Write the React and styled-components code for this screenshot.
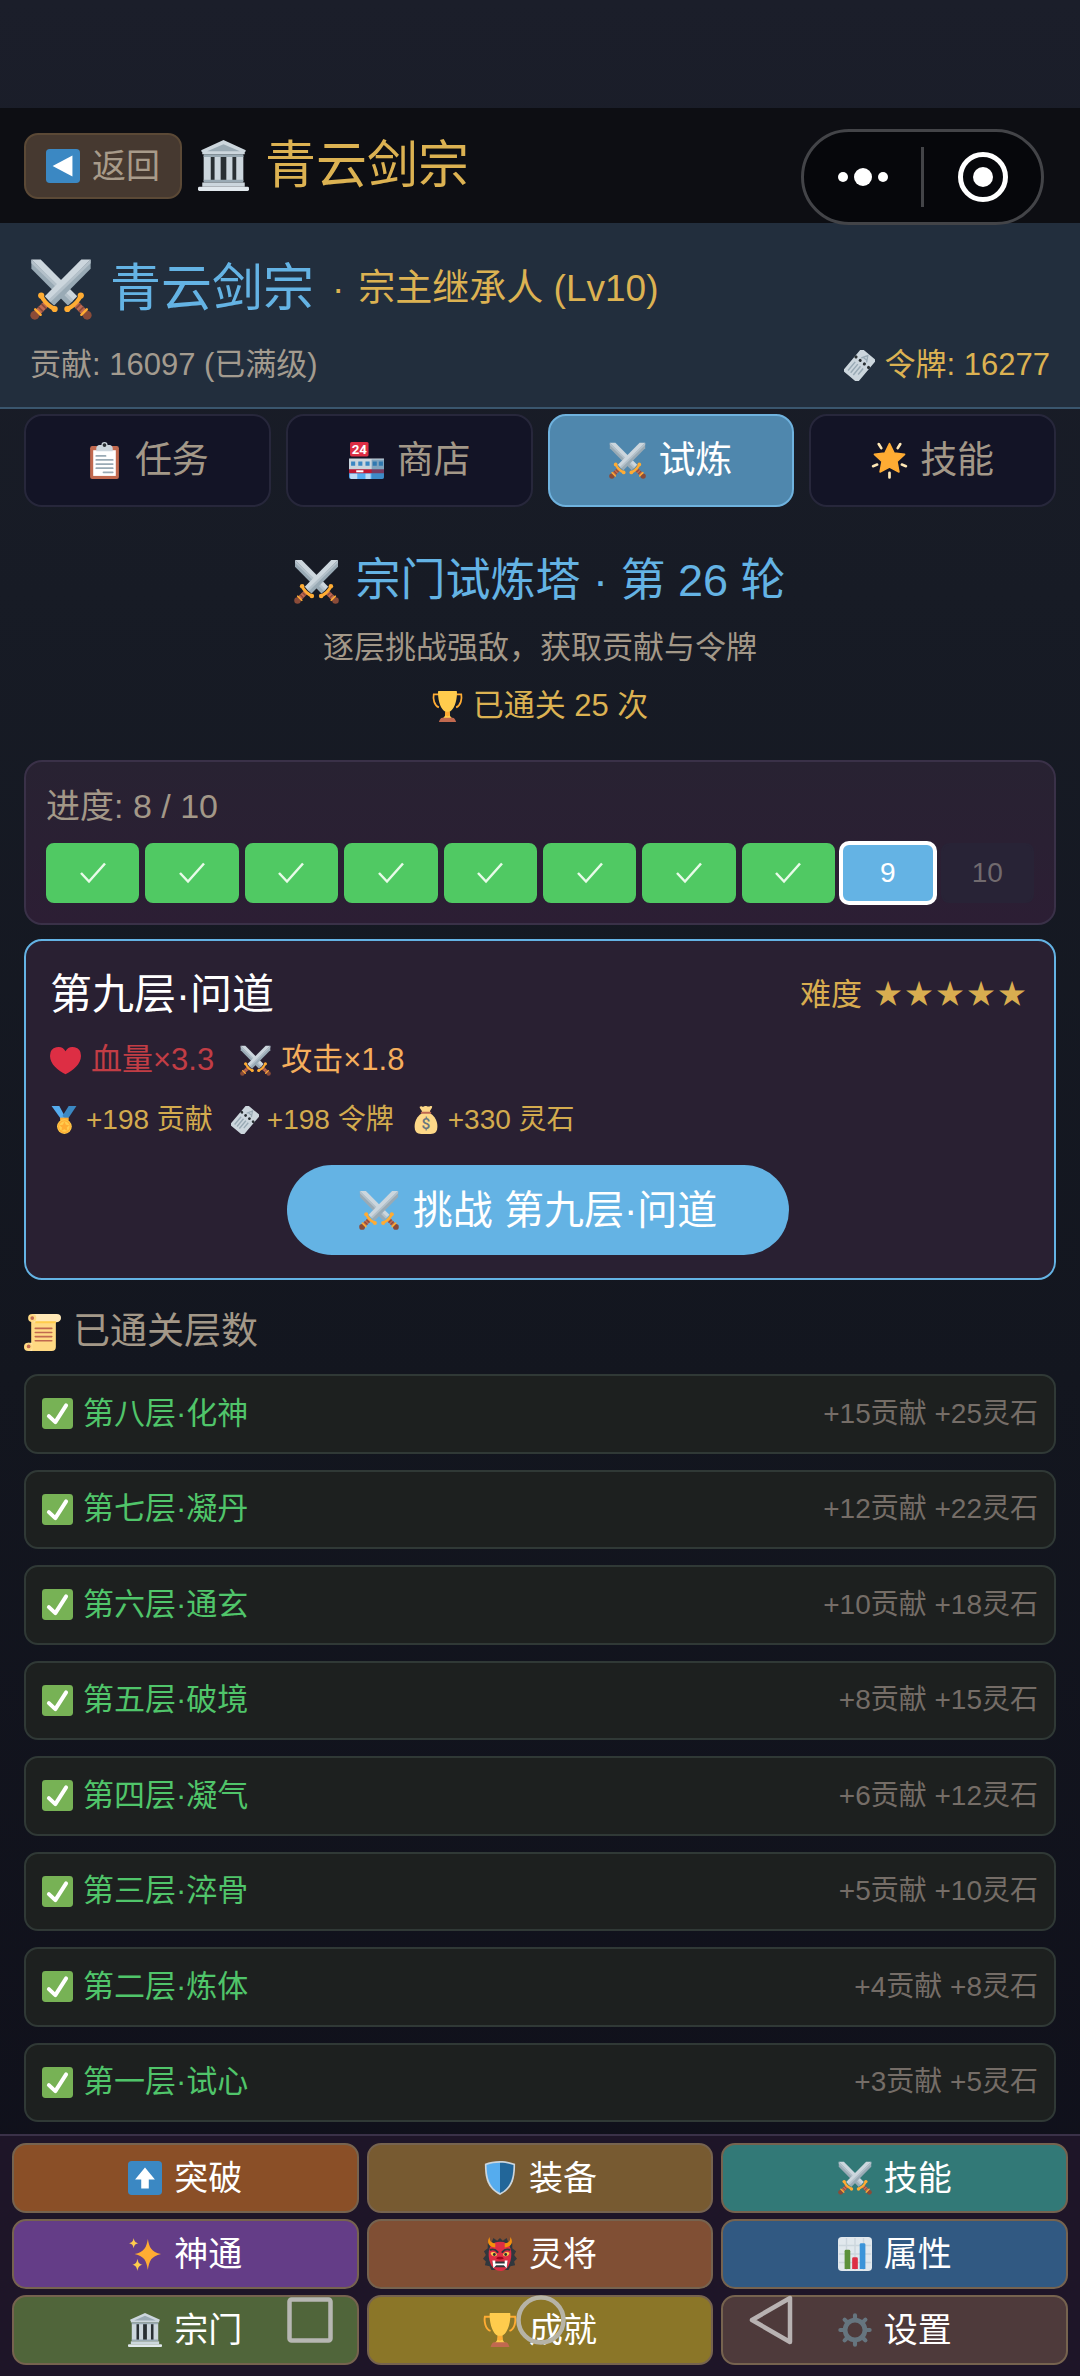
import React from 'react'
import styled, { createGlobalStyle } from 'styled-components'

const GlobalStyle = createGlobalStyle`
  * {
    box-sizing: border-box;
  }

  body {
    margin: 0;
    background: #10111b;
    font-family: 'Liberation Sans', 'Noto Sans CJK SC', sans-serif;
  }

  button {
    font-family: inherit;
    line-height: 50px;
    cursor: pointer;
  }

  h1, h2, h3, p, ul {
    margin: 0;
    padding: 0;
    font-weight: 400;
  }
`

/* ---------- icons ---------- */

const Svg = styled.svg`
  display: block;
  flex: none;
  width: ${p => p.$size}px;
  height: ${p => p.$size}px;
`

const Icon = ({ size, children }) => (
  <Svg $size={size} viewBox="0 0 36 36" aria-hidden="true">{children}</Svg>
)

const Sword = ({ transform }) => (
  <g transform={transform}>
    <path fill="#99AAB5" d="M35.2.8v5.400L14 27.600 11 25z" />
    <path fill="#CCD6DD" d="M35.2.8h-5.400L8.600 22.200l2.600 2.800z" />
    <path fill="#B4C1CA" d="M35.2.8L10.800 24.200l1.200 1.400L35.2 3z" />
    <path stroke="#BF6952" strokeWidth="3.8" d="M9.500 26.500L4 32" />
    <path stroke="#8A4B38" strokeWidth="1" d="M4.800 28.400l2.800 2.800M6.600 26.600l2.800 2.800" />
    <circle fill="#8A4B38" cx="2.8" cy="33.2" r="2.6" />
    <path fill="none" stroke="#FFAC33" strokeWidth="2.4" strokeLinecap="round" d="M6.6 22c.6 1.4 1 2.2 2.4 3.6l1.6 1.6c1.4 1.2 2 1.6 3.4 2.2" />
    <circle fill="#FFAC33" cx="6.5" cy="21.8" r="1.8" />
    <circle fill="#FFAC33" cx="14.3" cy="29.6" r="1.8" />
    <path stroke="#FFAC33" strokeWidth="1.4" strokeLinecap="round" d="M3 29.800l3.200 3.200" />
  </g>
)

const Swords = ({ size }) => (
  <Icon size={size}>
    <Sword transform="translate(36 0) scale(-1 1)" />
    <Sword />
  </Icon>
)

const BackArrow = ({ size }) => (
  <Icon size={size}>
    <rect fill="#3B88C3" width="36" height="36" rx="4" />
    <path fill="#fff" d="M7 18L28 7v22z" />
  </Icon>
)

const UpArrow = ({ size }) => (
  <Icon size={size}>
    <rect fill="#3B88C3" width="36" height="36" rx="4" />
    <path fill="#fff" d="M18 7l10.500 12.500H22V29h-8v-9.500H7.500z" />
  </Icon>
)

const Temple = ({ size }) => (
  <Icon size={size}>
    <path fill="#292F33" d="M5 11h26v18H5z" />
    <path fill="#CCD6DD" d="M18 0L2.6 7c-.5.3-.6 1 .4 1.4V10h30V8.400c1-.4.9-1.100.4-1.400z" />
    <path fill="#9AAAB4" d="M18 3l11.500 5h-23z" />
    <path fill="#CCD6DD" d="M4 11h5v18H4zm7.700 0H16v18h-4.300zm8.300 0h4.300v18H20zm7 0h5v18h-5z" />
    <path fill="#9AAAB4" d="M4 10h28v2H4zM4 28h28v2H4z" />
    <path fill="#CCD6DD" d="M3 30h30v3H3z" />
    <rect fill="#E1E8ED" y="33" width="36" height="3" rx="1" />
  </Icon>
)

const Ticket = ({ size }) => (
  <Icon size={size}>
    <g transform="rotate(40 18 18)">
      <path fill="#CCD6DD" d="M9 1h18a2 2 0 0 1 2 2v30a2 2 0 0 1-2 2H9a2 2 0 0 1-2-2V3a2 2 0 0 1 2-2z" />
      <path stroke="#99AAB5" strokeWidth="1.7" d="M11.500 18v13M15.500 18v13M19.500 18v13M23.500 18v9" />
      <g fill="#292F33">
        <circle cx="8.5" cy="13" r="1.8" />
        <circle cx="14.8" cy="13" r="1.8" />
        <circle cx="21.2" cy="13" r="1.8" />
        <circle cx="27.5" cy="13" r="1.8" />
      </g>
      <path fill="none" stroke="#99AAB5" strokeWidth="1.6" d="M14 10l4-7 4 7M15.500 8h5" />
    </g>
  </Icon>
)

const Clipboard = ({ size }) => (
  <Icon size={size}>
    <rect fill="#C1694F" x="4" y="4" width="28" height="32" rx="2" />
    <path fill="#fff" d="M7 8h22v25H7z" />
    <path fill="#CCD6DD" d="M23 3h-2a3 3 0 0 0-6 0h-2c-1.500 0-3 1.500-3 3v3h16V6c0-1.500-1.500-3-3-3z" />
    <circle fill="#292F33" cx="18" cy="3" r="1.8" />
    <path stroke="#99AAB5" strokeWidth="1.7" strokeLinecap="round" d="M10 13.500h9M10 17.500h16M10 21.500h16M10 25.500h16M17 29.500h9" />
  </Icon>
)

const Store = ({ size }) => (
  <Icon size={size}>
    <path fill="#55ACEE" d="M1 17h34v17a2 2 0 0 1-2 2H3a2 2 0 0 1-2-2z" />
    <path fill="#CCD6DD" d="M1 16h34v11H1z" />
    <path fill="#3B88C3" d="M3 19h4v4H3zM10 19h4v4h-4zM17 19h4v4h-4zM24 19h4v4h-4zM30 19h4v4h-4z" />
    <path fill="#BE1931" d="M1 26.500h34v4H1z" />
    <path fill="#fff" d="M8 27.500h7v2H8z" />
    <path fill="#BBDDF5" d="M2 31h7v5H3l-1-1zM17 31h5v5h-5z" />
    <path fill="#226699" opacity=".45" d="M23 17h12v17a2 2 0 0 1-2 2H23z" />
    <rect fill="#DD2E44" x="2" width="18" height="14" rx="1.5" />
    <text x="11" y="11.5" textAnchor="middle" fontFamily="Roboto, sans-serif" fontWeight="700" fontSize="13" fill="#fff">24</text>
  </Icon>
)

const GlowStar = ({ size }) => (
  <Icon size={size}>
    <path fill="#FFAC33" stroke="#FFAC33" strokeWidth="1.5" strokeLinejoin="round" d="M18 1.500l4.500 9.200 10.200 1.300-7.400 7 1.900 10.200L18 24.400l-9.200 4.800L10.700 19 3.300 12l10.200-1.300z" />
    <g stroke="#FFE8B6" strokeWidth="2.6" strokeLinecap="round">
      <path d="M7.500 2l2.500 4M28.500 2L26 6M2 23.500l4-1.500M34 23.500L30 22M18 30v4.500" />
    </g>
  </Icon>
)

const Trophy = ({ size }) => (
  <Icon size={size}>
    <path fill="none" stroke="#FFAC33" strokeWidth="2" d="M9 4H2c-1 5 .5 13 6 15M27 4h7c1 5-.5 13-6 15" />
    <path fill="#FFCC4D" d="M7.500 0h21c.4 0 .5 1 .5 2 0 11-4 20-8.500 22-.5 4 .5 6 3.500 8H12c3-2 4-4 3.500-8C11 22 7 13 7 2c0-1 .1-2 .5-2z" />
    <path fill="#FFAC33" d="M15.500 24h5l.5 4-3 1.500L15 28z" />
    <path fill="#C1694F" d="M12 31h12c2 0 3 2 4 5H8c1-3 2-5 4-5z" />
  </Icon>
)

const Heart = ({ size }) => (
  <Icon size={size}>
    <path fill="#DD2E44" d="M35.900 11.800A9.500 9.500 0 0 0 18 7.400 9.500 9.500 0 0 0 .1 11.800C-.8 21.300 9 29.500 18 34c9-4.500 18.800-12.700 17.900-22.200z" />
  </Icon>
)

const Medal = ({ size }) => (
  <Icon size={size}>
    <path fill="#55ACEE" d="M2 0h10l8 15-5 3z" />
    <path fill="#3B88C3" d="M24 0h10L22 18l-6-5z" />
    <path fill="#FFAC33" d="M13 15h11v4H13z" />
    <circle fill="#FFCC4D" cx="18.5" cy="26.5" r="9.5" />
    <circle fill="none" stroke="#FFAC33" strokeWidth="1.5" cx="18.5" cy="26.5" r="7.5" />
    <path fill="#FFAC33" d="M18.500 20l1.900 4.100 4.500.5-3.400 3 1 4.400-4-2.200-4 2.200 1-4.400-3.400-3 4.500-.5z" />
  </Icon>
)

const MoneyBag = ({ size }) => (
  <Icon size={size}>
    <path fill="#FDD888" d="M23 9c10 6 11 18 8.500 23-1.500 3-4 4-13.500 4S6 35 4.500 32C2 27 3 15 13 9z" />
    <path fill="#FDD888" d="M10 1c2-2 3 .5 4.500 0S17-.5 18.500 0 21 1 22.500.5 26-.5 26 1c0 2-3 4-3 7H13c0-3-4-5-3-7z" />
    <path fill="#BF6952" d="M12.500 7.500h11a1.200 1.200 0 0 1 0 2.500h-11a1.200 1.200 0 0 1 0-2.500z" />
    <text x="18" y="30" textAnchor="middle" fontFamily="Roboto, sans-serif" fontWeight="500" fontSize="20" fill="#67757F">$</text>
  </Icon>
)

const Scroll = ({ size }) => (
  <Icon size={size}>
    <path fill="#FFD983" d="M7 4h24v28a4 4 0 0 1-4 4H7z" />
    <path fill="#FFE8B6" d="M8 0h24a4 4 0 0 1 4 4c0 2-1.500 4-4 4H8z" />
    <path fill="#FFCC4D" d="M11 7h20v2H11z" />
    <circle fill="#FFD983" cx="8" cy="4" r="4" />
    <circle fill="#C1694F" cx="8" cy="4" r="1.8" />
    <path fill="#FFE8B6" d="M4 28h4v8H4z" />
    <circle fill="#FFD983" cx="4" cy="32" r="4" />
    <circle fill="#C1694F" cx="4.5" cy="31.5" r="1.8" />
    <path stroke="#C1694F" strokeWidth="1.6" strokeLinecap="round" d="M11 14h16M11 18h16M11 22h16M11 26h16" />
  </Icon>
)

const CheckBox = ({ size }) => (
  <Icon size={size}>
    <rect fill="#77B255" width="36" height="36" rx="4" />
    <path fill="none" stroke="#fff" strokeWidth="4.6" strokeLinecap="round" strokeLinejoin="round" d="M8 21l7.500 7L28 8.500" />
  </Icon>
)

const Shield = ({ size }) => (
  <Icon size={size}>
    <path fill="#CCD6DD" d="M18 0c6 0 11 1 16 3 0 15-2 26-16 33C4 29 2 18 2 3c5-2 10-3 16-3z" />
    <path fill="#55ACEE" d="M18 1.800c-5.500 0-9.800.8-14.300 2.400C4 17.500 6 27.500 18 34z" />
    <path fill="#269" d="M18 1.800c5.500 0 9.800.8 14.300 2.400C32 17.500 30 27.500 18 34z" />
  </Icon>
)

const Sparkles = ({ size }) => (
  <Icon size={size}>
    <path fill="#FFAC33" d="M21 2c1.500 9 3.500 13.500 14 16-10.500 2.500-12.500 7-14 17-1.500-10-3.500-14.500-14-17 10.500-2.500 12.500-7 14-16z" />
    <path fill="#FFCC4D" d="M6 1c.7 3.500 1.500 4.800 5 5.500C7.500 7.200 6.700 8.500 6 12c-.7-3.500-1.500-4.800-5-5.500C4.500 5.800 5.300 4.500 6 1zM10 23c.8 4 1.700 5.600 5.500 6.500C11.700 30.400 10.800 32 10 36c-.8-4-1.700-5.600-5.500-6.500C8.300 28.600 9.200 27 10 23z" />
  </Icon>
)

const Ogre = ({ size }) => (
  <Icon size={size}>
    <path fill="#31373D" d="M18 1l3 3 4-3 2 5 4 1 0 5 4 3-2 4 3 4-3 3 1 4-5 1-2 4H9l-2-4-5-1 1-4-3-3 3-4-2-4 4-3V7l4-1 2-5 4 3z" />
    <path fill="#DD2E44" d="M18 5c8 0 12 5 12 13 0 9-4 18-12 18S6 27 6 18C6 10 10 5 18 5z" />
    <path fill="#F4900C" d="M7 0c0 5 2 6 6 7v4C7 11 3 6 7 0zM29 0c0 5-2 6-6 7v4c6 0 10-5 6-11z" />
    <path fill="#FFCC4D" d="M8 17c2-2 6-1 7 2-2 2-6 2-7-2zM28 17c-2-2-6-1-7 2 2 2 6 2 7-2z" />
    <circle fill="#292F33" cx="12" cy="18.5" r="1.5" />
    <circle fill="#292F33" cx="24" cy="18.5" r="1.5" />
    <path fill="none" stroke="#31373D" strokeWidth="2" strokeLinecap="round" d="M8 13.500c3-1 6 .5 7.500 2.500M28 13.500c-3-1-6 .5-7.500 2.500" />
    <path fill="#A0041E" d="M14 23c1-2 2-2 4-2s3 0 4 2c-2 1-6 1-8 0z" />
    <path fill="#31373D" d="M10 26h16l-1 6H11z" />
    <path fill="#fff" d="M10 25h3v3h10v-3h3l-1 8-3-3h-8l-3 3z" />
  </Icon>
)

const Chart = ({ size }) => (
  <Icon size={size}>
    <rect fill="#E1E8ED" width="36" height="36" rx="4" />
    <path stroke="#CCD6DD" strokeWidth="1.5" d="M1 9h34M1 18h34M1 27h34M9 1v34M18 1v34M27 1v34" />
    <path fill="#5C913B" d="M7 15a1.500 1.500 0 0 1 1.500-1.500h3A1.500 1.500 0 0 1 13 15v19H7z" />
    <path fill="#DD2E44" d="M15 23a1.500 1.500 0 0 1 1.500-1.500h3A1.500 1.500 0 0 1 21 23v11h-6z" />
    <path fill="#3B94D9" d="M23 8a1.500 1.500 0 0 1 1.500-1.500h3A1.500 1.500 0 0 1 29 8v26h-6z" />
  </Icon>
)

const Gear = ({ size }) => (
  <Icon size={size}>
    <circle fill="none" stroke="#66757F" strokeWidth="5" cx="18" cy="18" r="10.5" />
    <g stroke="#66757F" strokeWidth="4.4" strokeLinecap="round">
      <path d="M18 2.500V6M18 30v3.500M2.500 18H6M30 18h3.500M7 7l2.500 2.500M26.500 26.500L29 29M7 29l2.500-2.500M26.500 9.500L29 7" />
    </g>
  </Icon>
)

const Tick = () => (
  <svg width="26" height="22" viewBox="0 0 26 22" role="img" aria-label="已通关">
    <path fill="none" stroke="#e8fbe9" strokeWidth="2.5" d="M1 11l8 8.500L25 1.500" />
  </svg>
)

/* ---------- layout ---------- */

const Page = styled.div`
  position: relative;
  display: flex;
  flex-direction: column;
  min-height: 100vh;
  padding-top: 108px;
  background: linear-gradient(180deg, #1b1e2a 0%, #171b25 25%, #13161f 58%, #0f0f1a 100%);
`

const Header = styled.header`
  display: flex;
  align-items: center;
  gap: 16px;
  height: 115px;
  padding: 0 24px;
  background: #0d0e13;
`

const BackButton = styled.button`
  display: flex;
  align-items: center;
  gap: 12px;
  height: 66px;
  padding: 0 20px;
  border: 2px solid #5b4936;
  border-radius: 14px;
  background: #463930;
  color: #a89b8a;
  font-size: 34px;
`

const PageTitle = styled.h1`
  display: flex;
  align-items: center;
  gap: 16px;
  color: #dcb252;
  font-size: 51px;
  line-height: 72px;
`

/* host app capsule, floats over the header */
const Capsule = styled.div`
  position: absolute;
  top: 129px;
  right: 36px;
  display: flex;
  align-items: center;
  width: 243px;
  height: 96px;
  border: 3px solid #434448;
  border-radius: 48px;
  background: #06070b;
`

const CapsuleButton = styled.button`
  display: flex;
  flex: 1;
  align-items: center;
  justify-content: center;
  height: 60px;
  padding: 0;
  border: 0;
  background: none;

  & + & {
    border-left: 3px solid #434448;
  }
`

const SectPanel = styled.section`
  padding: 30px 30px 11px;
  border-bottom: 2px solid #3a566e;
  background: #222e3d;
`

const SectName = styled.div`
  display: flex;
  align-items: center;
  gap: 18px;
  color: #64b3e4;
  font-size: 51px;
  line-height: 72px;
`

const SectRank = styled.span`
  display: flex;
  gap: 14px;
  color: #dcb252;
  font-size: 37px;
`

const SectStats = styled.div`
  display: flex;
  justify-content: space-between;
  margin-top: 9px;
  color: #a39b8f;
  font-size: 31px;
  line-height: 62px;
`

const Label = styled.span`
  display: flex;
  align-items: center;
  gap: ${p => p.$gap || 10}px;
  color: ${p => p.$color || 'inherit'};
`

const Tabs = styled.nav`
  display: grid;
  grid-template-columns: repeat(4, 1fr);
  gap: 15px;
  padding: 5px 24px 0;
`

const Tab = styled.button`
  display: flex;
  align-items: center;
  justify-content: center;
  gap: 12px;
  height: 93px;
  padding: 0;
  border: 2px solid ${p => (p.$active ? '#6fb2de' : '#27273b')};
  border-radius: 18px;
  background: ${p => (p.$active ? '#4f87ad' : '#131426')};
  color: ${p => (p.$active ? '#fff' : '#a39888')};
  font-size: 37px;
`

const Main = styled.main`
  display: flex;
  flex: 1;
  flex-direction: column;
  padding: 38px 24px 12px;
`

const Intro = styled.div`
  display: flex;
  flex-direction: column;
  align-items: center;
  margin-bottom: 27px;
`

const TowerTitle = styled.h2`
  display: flex;
  align-items: center;
  gap: 16px;
  color: #64b3e4;
  font-size: 45px;
  line-height: 72px;
`

const IntroText = styled.p`
  color: #a39888;
  font-size: 31px;
  line-height: 62px;
`

const ClearCount = styled.p`
  display: flex;
  align-items: center;
  gap: 10px;
  color: #dcb252;
  font-size: 31px;
  line-height: 54px;
`

const Card = styled.section`
  margin-bottom: 14px;
  padding: 16px 20px 20px;
  border: 2px solid #3a3148;
  border-radius: 18px;
  background: linear-gradient(180deg, #282232, #2c1e34);
`

const ProgressText = styled.p`
  margin-bottom: 9px;
  color: #a39888;
  font-size: 34px;
  line-height: 56px;
`

const Steps = styled.div`
  display: grid;
  grid-template-columns: repeat(10, 1fr);
  gap: 6px;
`

const stepColors = { done: '#50c963', current: '#64b3e4', locked: '#282336' }

const Step = styled.span`
  display: flex;
  align-items: center;
  justify-content: center;
  height: 60px;
  border: 2px solid ${p => (p.$state === 'current' ? '#fff' : stepColors[p.$state])};
  border-radius: 8px;
  background: ${p => stepColors[p.$state]};
  box-shadow: ${p => (p.$state === 'current' ? '0 0 0 2px #fff' : 'none')};
  color: ${p => (p.$state === 'locked' ? '#716a6e' : '#fff')};
  font-size: 28px;
`

const FloorCard = styled(Card)`
  margin-bottom: 27px;
  padding: 22px 28px 23px 24px;
  border-color: #64b3e4;
  background: #292032;
`

const FloorHead = styled.div`
  display: flex;
  align-items: center;
  justify-content: space-between;
  line-height: 64px;
`

const FloorName = styled.h3`
  color: #fff;
  font-size: 42px;
`

const Difficulty = styled.span`
  display: flex;
  align-items: center;
  gap: 12px;
  color: #d8ad50;
  font-size: 31px;
`

const Stars = styled.span`
  display: flex;
  gap: 3px;
  font-size: 28px;
`

const Stats = styled.div`
  display: flex;
  gap: 26px;
  font-size: 31px;
  line-height: 66px;
`

const Rewards = styled.div`
  display: flex;
  gap: 18px;
  color: #d3ab4e;
  font-size: 28px;
  line-height: 54px;
`

const ChallengeButton = styled.button`
  display: flex;
  align-items: center;
  justify-content: center;
  gap: 14px;
  height: 90px;
  margin: 18px auto 0;
  padding: 0 72px;
  border: 0;
  border-radius: 45px;
  background: #64b3e4;
  color: #fff;
  font-size: 40px;
`

const SectionTitle = styled.h3`
  display: flex;
  align-items: center;
  gap: 12px;
  margin-bottom: 17px;
  color: #a39888;
  font-size: 37px;
  line-height: 50px;
`

const FloorList = styled.ul`
  display: grid;
  flex: 1;
  grid-auto-rows: minmax(72px, 1fr);
  gap: 16px;
  list-style: none;
`

const FloorRow = styled.li`
  display: flex;
  align-items: center;
  justify-content: space-between;
  padding: 0 16px;
  border: 2px solid #303936;
  border-radius: 14px;
  background: #1d201f;
  color: #50c56a;
  font-size: 31px;
  line-height: 50px;
`

const FloorReward = styled.span`
  color: #756d67;
  font-size: 28px;
`

const BottomNav = styled.nav`
  display: grid;
  grid-template-columns: repeat(3, 1fr);
  gap: 6px 8px;
  padding: 7px 12px 11px;
  border-top: 2px solid #3a3148;
  background: #1e1528;
`

const NavButton = styled.button`
  display: flex;
  align-items: center;
  justify-content: center;
  gap: 12px;
  height: 70px;
  padding: 0;
  border: 2px solid #76634f;
  border-radius: 14px;
  background: ${p => p.$color};
  color: #fff;
  font-size: 34px;
`

/* phone navigation keys drawn over the page */
const SystemKeys = styled.div`
  position: absolute;
  right: 0;
  bottom: 31px;
  left: 0;
  display: flex;
  align-items: center;
  justify-content: center;
  gap: 183px;
  pointer-events: none;
`

const tabs = [
  { icon: Clipboard, label: '任务' },
  { icon: Store, label: '商店' },
  { icon: Swords, label: '试炼', active: true },
  { icon: GlowStar, label: '技能' },
]

const floors = [
  { name: '第八层·化神', reward: '+15贡献 +25灵石' },
  { name: '第七层·凝丹', reward: '+12贡献 +22灵石' },
  { name: '第六层·通玄', reward: '+10贡献 +18灵石' },
  { name: '第五层·破境', reward: '+8贡献 +15灵石' },
  { name: '第四层·凝气', reward: '+6贡献 +12灵石' },
  { name: '第三层·淬骨', reward: '+5贡献 +10灵石' },
  { name: '第二层·炼体', reward: '+4贡献 +8灵石' },
  { name: '第一层·试心', reward: '+3贡献 +5灵石' },
]

const menu = [
  { icon: UpArrow, label: '突破', color: '#8a4f27' },
  { icon: Shield, label: '装备', color: '#775a31' },
  { icon: Swords, label: '技能', color: '#327977' },
  { icon: Sparkles, label: '神通', color: '#643d87' },
  { icon: Ogre, label: '灵将', color: '#804f34' },
  { icon: Chart, label: '属性', color: '#315982' },
  { icon: Temple, label: '宗门', color: '#50653a' },
  { icon: Trophy, label: '成就', color: '#8b7628' },
  { icon: Gear, label: '设置', color: '#4e3a3b' },
]

const CURRENT = 9

const stepState = n => {
  if (n < CURRENT) return 'done'
  return n === CURRENT ? 'current' : 'locked'
}

const App = () => (
  <Page lang="zh-CN">
    <GlobalStyle />
    <Header>
      <BackButton>
        <BackArrow size={34} />
        返回
      </BackButton>
      <PageTitle>
        <Temple size={51} />
        青云剑宗
      </PageTitle>
    </Header>
    <Capsule>
      <CapsuleButton aria-label="更多">
        <svg width="52" height="20" viewBox="0 0 52 20" fill="#fff">
          <circle cx="6" cy="10" r="5" />
          <circle cx="26" cy="10" r="9" />
          <circle cx="46" cy="10" r="5" />
        </svg>
      </CapsuleButton>
      <CapsuleButton aria-label="关闭">
        <svg width="50" height="50" viewBox="0 0 50 50">
          <circle cx="25" cy="25" r="22.5" fill="none" stroke="#fff" strokeWidth="5" />
          <circle cx="25" cy="25" r="10" fill="#fff" />
        </svg>
      </CapsuleButton>
    </Capsule>

    <SectPanel>
      <SectName>
        <Swords size={62} />
        青云剑宗
        <SectRank>
          <span>·</span>
          <span>宗主继承人 (Lv10)</span>
        </SectRank>
      </SectName>
      <SectStats>
        <span>贡献: 16097 (已满级)</span>
        <Label $color="#dcb252"><Ticket size={31} />令牌: 16277</Label>
      </SectStats>
    </SectPanel>

    <Tabs>
      {tabs.map(({ icon: TabIcon, label, active }) => (
        <Tab key={label} $active={active}>
          <TabIcon size={37} />
          {label}
        </Tab>
      ))}
    </Tabs>

    <Main>
      <Intro>
        <TowerTitle><Swords size={45} />宗门试炼塔 · 第 26 轮</TowerTitle>
        <IntroText>逐层挑战强敌，获取贡献与令牌</IntroText>
        <ClearCount><Trophy size={31} />已通关 25 次</ClearCount>
      </Intro>

      <Card>
        <ProgressText>进度: 8 / 10</ProgressText>
        <Steps>
          {Array.from({ length: 10 }, (_, i) => i + 1).map(n => (
            <Step key={n} $state={stepState(n)}>
              {n < CURRENT ? <Tick /> : n}
            </Step>
          ))}
        </Steps>
      </Card>

      <FloorCard>
        <FloorHead>
          <FloorName>第九层·问道</FloorName>
          <Difficulty>
            难度
            <Stars>
              {[1, 2, 3, 4, 5].map(n => <span key={n}>★</span>)}
            </Stars>
          </Difficulty>
        </FloorHead>
        <Stats>
          <Label $color="#c23d45"><Heart size={31} />血量×3.3</Label>
          <Label $color="#f5ae5c"><Swords size={31} />攻击×1.8</Label>
        </Stats>
        <Rewards>
          <Label $gap={8}><Medal size={28} />+198 贡献</Label>
          <Label $gap={8}><Ticket size={28} />+198 令牌</Label>
          <Label $gap={8}><MoneyBag size={28} />+330 灵石</Label>
        </Rewards>
        <ChallengeButton>
          <Swords size={40} />
          挑战 第九层·问道
        </ChallengeButton>
      </FloorCard>

      <SectionTitle><Scroll size={37} />已通关层数</SectionTitle>
      <FloorList>
        {floors.map(({ name, reward }) => (
          <FloorRow key={name}>
            <Label><CheckBox size={31} />{name}</Label>
            <FloorReward>{reward}</FloorReward>
          </FloorRow>
        ))}
      </FloorList>
    </Main>

    <BottomNav>
      {menu.map(({ icon: MenuIcon, label, color }) => (
        <NavButton key={label} $color={color}>
          <MenuIcon size={34} />
          {label}
        </NavButton>
      ))}
    </BottomNav>

    <SystemKeys>
      <svg width="46" height="46" viewBox="0 0 46 46">
        <rect x="2.5" y="2.5" width="41" height="41" rx="2" fill="none" stroke="#b6b7b2" strokeWidth="4.5" />
      </svg>
      <svg width="50" height="50" viewBox="0 0 50 50">
        <circle cx="25" cy="25" r="22.5" fill="none" stroke="#b6b3a6" strokeWidth="4.5" />
      </svg>
      <svg width="44" height="50" viewBox="0 0 44 50">
        <path d="M41 3v44L3 25z" fill="none" stroke="#b8b2b2" strokeWidth="4.5" strokeLinejoin="round" />
      </svg>
    </SystemKeys>
  </Page>
)

export default App
